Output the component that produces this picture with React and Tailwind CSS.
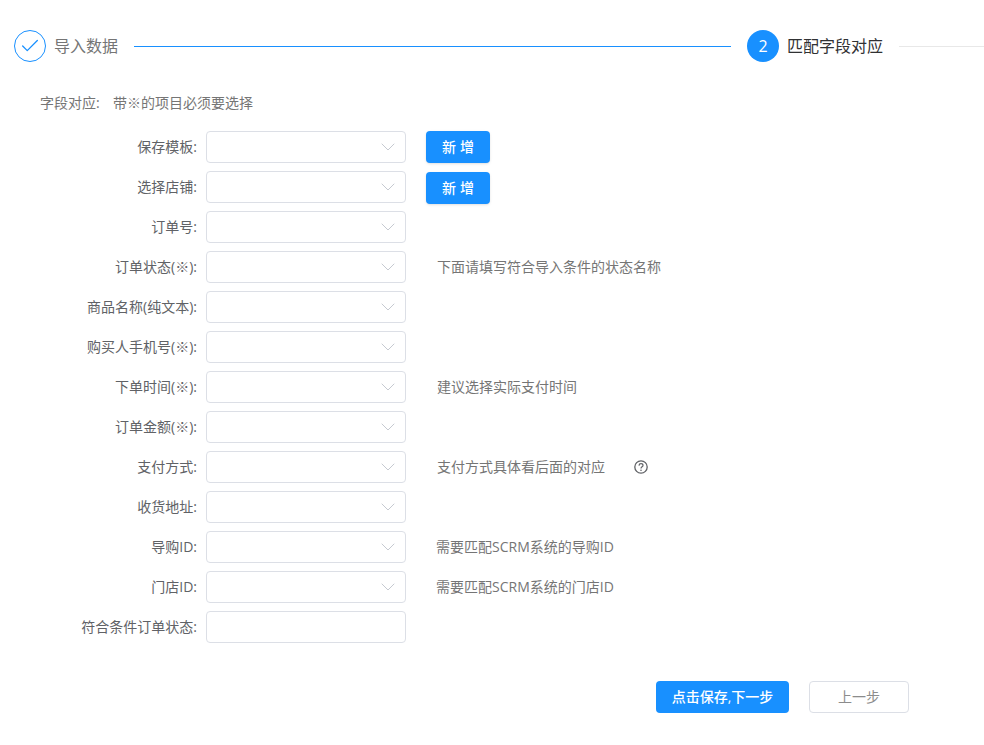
import React from "react";
import { ChevronDown, Check } from "lucide-react";

const rows = [
  { label: "保存模板:", action: true },
  { label: "选择店铺:", action: true },
  { label: "订单号:" },
  { label: "订单状态(※):", note: "下面请填写符合导入条件的状态名称" },
  { label: "商品名称(纯文本):" },
  { label: "购买人手机号(※):" },
  { label: "下单时间(※):", note: "建议选择实际支付时间" },
  { label: "订单金额(※):" },
  { label: "支付方式:", note: "支付方式具体看后面的对应", help: true },
  { label: "收货地址:" },
  { label: "导购ID:", note: "需要匹配SCRM系统的导购ID", latin: true },
  { label: "门店ID:", note: "需要匹配SCRM系统的门店ID", latin: true },
  { label: "符合条件订单状态:", plain: true },
];

const Row = ({ row, index }) => {
  return (
    <div className="flex h-8 items-center">
      <label className="w-[200px] shrink-0 pr-[3px] text-right text-sm text-[#606266]">
        {row.label}
      </label>
      <div className="ml-[6px] flex h-8 w-[200px] shrink-0 items-center justify-end rounded border border-[#dcdfe6] bg-white pr-[5px]">
        {!row.plain && (
          <ChevronDown size={24} strokeWidth={0.9} className="text-[#c0c4cc]" />
        )}
      </div>
      {row.action && (
        <button
          className={`ml-5 flex h-8 w-16 items-center justify-center rounded bg-[#1890ff] pl-1 text-sm font-medium tracking-[4px] text-white shadow-sm ${index === 1 ? "translate-y-px" : ""}`}
        >
          新增
        </button>
      )}
      {row.note && (
        <span className={`text-sm text-[#757575] ${row.latin ? "ml-[30px]" : "ml-[31px]"}`}>
          {row.note}
        </span>
      )}
      {row.help && (
        <svg width="14" height="14" viewBox="0 0 14 14" fill="none" className="ml-[29px] text-[#606266]">
          <circle cx="7" cy="7" r="6.2" stroke="currentColor" strokeWidth="1.3" />
          <path d="M5 5.6C5.1 4.4 5.9 3.7 7 3.7c1.1 0 2 .7 2 1.7 0 1.4-2 1.4-2 3" stroke="currentColor" strokeWidth="1.2" />
          <circle cx="7" cy="10.2" r=".8" fill="currentColor" />
        </svg>
      )}
    </div>
  );
};

const App = () => {
  return (
    <div className="h-[745px] w-[984px] overflow-hidden bg-white font-['Open_Sans','Noto_Sans_CJK_SC',sans-serif]">
      {/* steps */}
      <div className="flex items-center pl-[14px] pt-[30px]">
        <div className="flex h-8 w-8 items-center justify-center rounded-full border border-[#1890ff] text-[#1890ff]">
          <Check size={22} strokeWidth={1.4} />
        </div>
        <span className="ml-2 text-base text-[#757575]">导入数据</span>
        <div className="ml-4 h-px w-[597px] bg-[#1890ff]" />
        <div className="ml-4 flex h-8 w-8 items-center justify-center rounded-full bg-[#1890ff] text-base text-white">
          2
        </div>
        <span className="ml-2 text-base text-[#303133]">匹配字段对应</span>
        <div className="ml-4 h-px flex-1 bg-[#e8e8e8]" />
      </div>

      <div className="mt-[31px] flex pl-10 text-sm leading-5 text-[#757575]">
        <span className="w-[73px]">字段对应:</span>
        <span>带※的项目必须要选择</span>
      </div>

      <div className="mt-[18px] flex flex-col gap-2">
        {rows.map((row, i) => (
          <Row key={row.label} row={row} index={i} />
        ))}
      </div>

      <div className="mt-[38px] flex pl-[656px]">
        <button className="h-8 w-[133px] rounded bg-[#1890ff] text-sm font-medium text-white">
          点击保存,下一步
        </button>
        <button className="ml-5 h-8 w-[100px] rounded border border-[#dcdfe6] bg-white text-sm text-[#8c8c8c]">
          上一步
        </button>
      </div>
    </div>
  );
};

export default App;
